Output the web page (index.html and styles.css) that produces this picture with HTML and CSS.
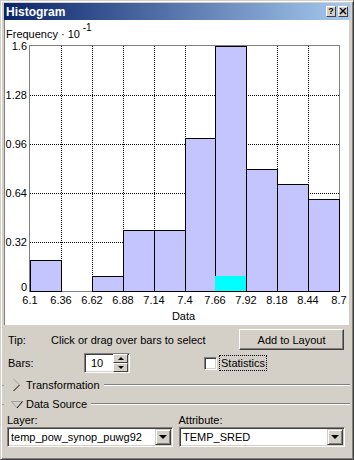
FILE: index.html
```html
<!DOCTYPE html>
<html lang="en">

<head>
    <meta charset="UTF-8">
    <title>Histogram</title>
    <link rel="stylesheet" href="styles.css">
</head>

<body>
    <div class="window">
        <!-- Title bar -->
        <div class="titlebar">
            <span class="title">Histogram</span>
            <span class="title-btn">?</span>
            <span class="title-btn">
                <svg width="8" height="7" viewBox="0 0 8 7">
                    <path d="M1 0 L7 6 M7 0 L1 6" stroke="#000" stroke-width="1.4" />
                </svg>
            </span>
        </div>

        <!-- Chart -->
        <div class="chart">
            <svg class="plot" width="344" height="305" font-family="Liberation Sans, Arial, sans-serif" font-size="11">
                <text x="1" y="18">Frequency · 10<tspan dy="-7" font-size="10"> -1</tspan></text>

                <g stroke="#000" stroke-dasharray="1 1" shape-rendering="crispEdges">
                    <line x1="56.5" y1="26" x2="56.5" y2="271" />
                    <line x1="87.5" y1="26" x2="87.5" y2="271" />
                    <line x1="118.5" y1="26" x2="118.5" y2="271" />
                    <line x1="149.5" y1="26" x2="149.5" y2="271" />
                    <line x1="180.5" y1="26" x2="180.5" y2="271" />
                    <line x1="210.5" y1="26" x2="210.5" y2="271" />
                    <line x1="241.5" y1="26" x2="241.5" y2="271" />
                    <line x1="272.5" y1="26" x2="272.5" y2="271" />
                    <line x1="303.5" y1="26" x2="303.5" y2="271" />
                    <line x1="25" y1="75.5" x2="334" y2="75.5" />
                    <line x1="25" y1="124.5" x2="334" y2="124.5" />
                    <line x1="25" y1="173.5" x2="334" y2="173.5" />
                    <line x1="25" y1="222.5" x2="334" y2="222.5" />
                </g>

                <rect x="24.5" y="25.5" width="310" height="246" fill="none" stroke="#808080" shape-rendering="crispEdges" />

                <g fill="#c4c4ff" stroke="#000" shape-rendering="crispEdges">
                    <rect x="25.5" y="240.5" width="31" height="31" />
                    <rect x="87.5" y="256.5" width="31" height="15" />
                    <rect x="118.5" y="210.5" width="31" height="61" />
                    <rect x="149.5" y="210.5" width="31" height="61" />
                    <rect x="180.5" y="118.5" width="30" height="153" />
                    <rect x="210.5" y="26.5" width="31" height="245" />
                    <rect x="241.5" y="149.5" width="31" height="122" />
                    <rect x="272.5" y="164.5" width="31" height="107" />
                    <rect x="303.5" y="179.5" width="31" height="92" />
                </g>
                <rect x="210" y="256" width="31" height="15" fill="#00ffff" />

                <g text-anchor="end">
                    <text x="22" y="30">1.6</text>
                    <text x="22" y="79">1.28</text>
                    <text x="22" y="128">0.96</text>
                    <text x="22" y="177">0.64</text>
                    <text x="22" y="226">0.32</text>
                    <text x="22" y="271">0</text>
                </g>

                <g text-anchor="middle">
                    <text x="25" y="284">6.1</text>
                    <text x="56" y="284">6.36</text>
                    <text x="87" y="284">6.62</text>
                    <text x="118" y="284">6.88</text>
                    <text x="149" y="284">7.14</text>
                    <text x="180" y="284">7.4</text>
                    <text x="210" y="284">7.66</text>
                    <text x="241" y="284">7.92</text>
                    <text x="272" y="284">8.18</text>
                    <text x="303" y="284">8.44</text>
                    <text x="334" y="284">8.7</text>
                    <text x="178.5" y="300">Data</text>
                </g>
            </svg>
        </div>

        <!-- Controls -->
        <div class="controls">
            <div class="row tip-row">
                <span class="label tip-label">Tip:</span>
                <span class="tip">Click or drag over bars to select</span>
                <button class="btn">Add to Layout</button>
            </div>

            <div class="row bars-row">
                <span class="label bars-label">Bars:</span>
                <div class="spin">
                    <span class="spin-value">10</span>
                    <div class="spin-btns">
                        <span class="spin-btn"><span class="arrow-up"></span></span>
                        <span class="spin-btn"><span class="arrow-down"></span></span>
                    </div>
                </div>
                <span class="checkbox"></span>
                <span class="check-text">Statistics</span>
            </div>

            <div class="group transform-group">
                <span class="group-stub"></span>
                <svg class="expander" width="9" height="14" viewBox="0 0 9 14">
                    <path d="M1.5 1 L7.5 7" stroke="#a0a0a0" fill="none" />
                    <path d="M7.5 7 L1.5 13" stroke="#000" fill="none" />
                </svg>
                <span class="group-title">Transformation</span>
                <span class="group-line"></span>
            </div>

            <div class="group source-group">
                <span class="group-stub"></span>
                <svg class="expander" width="12" height="8" viewBox="0 0 12 8">
                    <path d="M0.5 0.5 L11.5 0.5" stroke="#a0a0a0" fill="none" />
                    <path d="M11.5 0.5 L6 7" stroke="#000" fill="none" />
                    <path d="M0.5 0.5 L6 7" stroke="#a0a0a0" fill="none" />
                </svg>
                <span class="group-title">Data Source</span>
                <span class="group-line"></span>
            </div>

            <div class="row field-labels">
                <span class="field-label">Layer:</span>
                <span class="field-label">Attribute:</span>
            </div>

            <div class="row combos">
                <div class="combo">
                    <span class="combo-value">temp_pow_synop_puwg92</span>
                    <span class="combo-btn"><span class="arrow-down"></span></span>
                </div>
                <div class="combo">
                    <span class="combo-value">TEMP_SRED</span>
                    <span class="combo-btn"><span class="arrow-down"></span></span>
                </div>
            </div>
        </div>
    </div>
</body>

</html>
```

FILE: styles.css
```css
/* General */
body {
    margin: 0;
    background: #d4d0c8;
    font-family: "Liberation Sans", Arial, sans-serif;
    font-size: 11px;
    color: #000;
}

.window {
    width: 354px;
    height: 460px;
    box-sizing: border-box;
    border: 1px solid;
    border-color: #d4d0c8 #404040 #404040 #d4d0c8;
    box-shadow: inset 1px 1px #fff, inset -1px -1px #808080;
    padding: 2px 3px 3px 3px;
    background: #d4d0c8;
}

/* Title bar */
.titlebar {
    height: 17px;
    display: flex;
    align-items: center;
    background: linear-gradient(to right, #0a246a, #a6caf0);
}

.title {
    flex: 1;
    color: #fff;
    font-weight: bold;
    font-size: 12px;
    padding-left: 2px;
}

.title-btn {
    width: 10px;
    height: 11px;
    box-sizing: border-box;
    margin-right: 2px;
    background: #d4d0c8;
    border: 1px solid;
    border-color: #fff #404040 #404040 #fff;
    display: flex;
    align-items: center;
    justify-content: center;
    font-weight: bold;
    font-size: 9px;
    line-height: 9px;
}

/* Chart */
.chart {
    height: 305px;
    margin-right: 1px;
    background: #fff;
    border-left: 1px solid #808080;
}

.plot {
    display: block;
}

/* Controls */
.controls {
    display: flex;
    flex-direction: column;
}

.row {
    display: flex;
    align-items: center;
}

.tip-row {
    height: 21px;
    margin-top: 4px;
    padding-left: 4px;
}

.tip-label {
    width: 43px;
}

.tip {
    flex: 1;
}

.btn {
    width: 105px;
    height: 21px;
    margin-right: 6px;
    padding: 0;
    background: #d4d0c8;
    border: 1px solid;
    border-color: #fff #404040 #404040 #fff;
    box-shadow: inset -1px -1px #808080;
    font-family: inherit;
    font-size: 11px;
    color: #000;
}

.bars-row {
    height: 20px;
    margin-top: 3px;
    padding-left: 4px;
}

.bars-label {
    width: 76px;
}

.spin {
    width: 46px;
    height: 20px;
    box-sizing: border-box;
    display: flex;
    align-items: center;
    background: #fff;
    border: 1px solid;
    border-color: #808080 #fff #fff #808080;
    box-shadow: inset 1px 1px #404040, inset -1px -1px #d4d0c8;
}

.spin-value {
    flex: 1;
    padding-left: 6px;
}

.spin-btns {
    display: flex;
    flex-direction: column;
    margin-right: 1px;
}

.spin-btn {
    width: 15px;
    height: 9px;
    box-sizing: border-box;
    background: #d4d0c8;
    border: 1px solid;
    border-color: #fff #404040 #404040 #fff;
    display: flex;
    align-items: center;
    justify-content: center;
}

.arrow-up {
    width: 0;
    height: 0;
    border-left: 3px solid transparent;
    border-right: 3px solid transparent;
    border-bottom: 3px solid #000;
}

.arrow-down {
    width: 0;
    height: 0;
    border-left: 3px solid transparent;
    border-right: 3px solid transparent;
    border-top: 3px solid #000;
}

.checkbox {
    width: 13px;
    height: 13px;
    box-sizing: border-box;
    margin-left: 74px;
    background: #fff;
    border: 1px solid;
    border-color: #808080 #fff #fff #808080;
    box-shadow: inset 1px 1px #404040, inset -1px -1px #d4d0c8;
}

.check-text {
    margin-left: 3px;
    padding: 1px 1px;
    outline: 1px dotted #000;
}

/* Collapsible groups */
.group {
    height: 14px;
    display: flex;
    align-items: center;
}

.transform-group {
    margin-top: 5px;
}

.source-group {
    margin-top: 5px;
}

.group-stub {
    width: 2px;
    height: 0;
    margin-left: -2px;
    border-top: 1px solid #a0a0a0;
}

.transform-group .expander {
    margin-left: 8px;
}

.transform-group .group-title {
    margin-left: 5px;
}

.source-group .expander {
    margin-left: 7px;
    margin-top: 1px;
}

.source-group .group-title {
    margin-left: 3px;
}

.group-line {
    flex: 1;
    height: 0;
    margin-left: 4px;
    border-top: 1px solid #808080;
    border-bottom: 1px solid #fff;
}

/* Data source fields */
.field-labels {
    height: 13px;
    margin-top: 2px;
    padding-left: 3px;
}

.field-label {
    width: 172px;
}

.combos {
    height: 20px;
    margin-top: 1px;
    padding-left: 3px;
    gap: 6px;
}

.combo {
    width: 166px;
    height: 20px;
    box-sizing: border-box;
    display: flex;
    align-items: center;
    background: #fff;
    border: 1px solid;
    border-color: #808080 #fff #fff #808080;
    box-shadow: inset 1px 1px #404040, inset -1px -1px #d4d0c8;
}

.combo-value {
    flex: 1;
    padding-left: 3px;
}

.combo-btn {
    width: 16px;
    height: 16px;
    box-sizing: border-box;
    margin-right: 1px;
    background: #d4d0c8;
    border: 1px solid;
    border-color: #d4d0c8 #404040 #404040 #d4d0c8;
    box-shadow: inset 1px 1px #fff, inset -1px -1px #808080;
    display: flex;
    align-items: center;
    justify-content: center;
}

.combo-btn .arrow-down {
    border-left-width: 4px;
    border-right-width: 4px;
    border-top-width: 4px;
}
```
